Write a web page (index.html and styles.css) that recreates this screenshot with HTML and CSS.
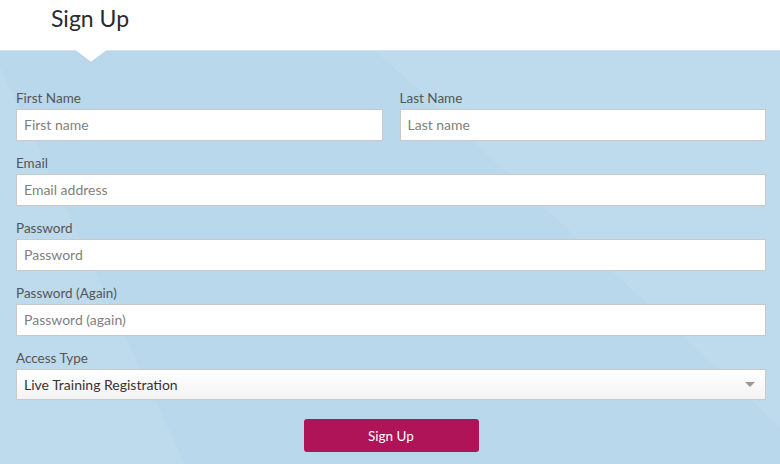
FILE: index.html
```html
<!DOCTYPE html>
<html lang="en">
<head>
    <meta charset="UTF-8">
    <meta name="viewport" content="width=device-width, initial-scale=1.0">
    <title>Sign Up</title>
    <link rel="stylesheet" href="styles.css">
</head>

<body>
    <div class="header">
        <h1>Sign Up</h1>
    </div>

    <form class="signup">
        <div class="row">
            <div class="field">
                <label for="firstName">First Name</label>
                <input type="text" id="firstName" placeholder="First name">
            </div>
            <div class="field">
                <label for="lastName">Last Name</label>
                <input type="text" id="lastName" placeholder="Last name">
            </div>
        </div>

        <div class="field">
            <label for="email">Email</label>
            <input type="email" id="email" placeholder="Email address">
        </div>

        <div class="field">
            <label for="password">Password</label>
            <input type="password" id="password" placeholder="Password">
        </div>

        <div class="field">
            <label for="password2">Password (Again)</label>
            <input type="password" id="password2" placeholder="Password (again)">
        </div>

        <div class="field">
            <label for="access">Access Type</label>
            <div class="select-wrap">
                <select id="access">
                    <option>Live Training Registration</option>
                </select>
            </div>
        </div>

        <div class="actions">
            <button type="button">Sign Up</button>
        </div>
    </form>
</body>

</html>
```

FILE: styles.css
```css
* {
    box-sizing: border-box;
}

body {
    margin: 0;
    height: 464px;
    overflow: hidden;
    font-family: Lato, "Open Sans", sans-serif;
    background-color: #b9d8ec;
}

.header {
    position: relative;
    height: 51px;
    background: #fff;
    border-bottom: 1px solid #d5e2ea;
    z-index: 1;
}

.header h1 {
    margin: 0;
    padding: 4px 0 0 51px;
    font-size: 23px;
    font-weight: normal;
    color: #2b2b2b;
}

/* little pointer under the title */
.header::after {
    content: "";
    position: absolute;
    left: 74px;
    bottom: -12px;
    width: 34px;
    height: 13px;
    background: #fff;
    clip-path: polygon(0 0, 100% 0, 50% 100%);
}

.header::before {
    content: "";
    position: absolute;
    left: 74px;
    bottom: -13px;
    width: 34px;
    height: 14px;
    background: rgba(0, 0, 0, 0.08);
    clip-path: polygon(0 0, 100% 0, 50% 100%);
    filter: blur(1px);
}

.signup {
    height: 413px;
    padding: 37px 14px 0 16px;
    display: flex;
    flex-direction: column;
    gap: 12px;
    background:
        linear-gradient(43deg, transparent 67%, rgba(255, 255, 255, 0.08) 67%),
        linear-gradient(245deg, transparent 81%, rgba(255, 255, 255, 0.08) 81%),
        #b9d8ec;
}

.row {
    display: flex;
    gap: 17px;
}

.row .field {
    flex: 1;
}

.field {
    display: flex;
    flex-direction: column;
}

.field label {
    height: 21px;
    line-height: 20px;
    font-size: 13.5px;
    color: #555;
}

.field input,
.field select {
    width: 100%;
    height: 32px;
    padding: 0 7px 2px;
    border: 1px solid #c9c9c9;
    border-radius: 0;
    background: #fff;
    font-family: inherit;
    font-size: 14px;
    color: #333;
    outline: none;
}

.field input::placeholder {
    color: #7f7f7f;
}

.select-wrap {
    position: relative;
}

.field select {
    height: 31px;
    padding-bottom: 0;
    appearance: none;
    -webkit-appearance: none;
    background: linear-gradient(to bottom, #fff, #f3f3f3);
    color: #333;
}

.select-wrap::after {
    content: "";
    position: absolute;
    right: 11px;
    top: 13px;
    border-left: 5px solid transparent;
    border-right: 5px solid transparent;
    border-top: 5px solid #999;
}

.actions {
    display: flex;
    justify-content: center;
    padding-top: 7px;
}

.actions button {
    width: 175px;
    height: 33px;
    border: none;
    border-radius: 3px;
    background: #ae1457;
    color: #fff;
    font-family: inherit;
    font-size: 13.5px;
}

button:hover {
    cursor: pointer;
}
```
